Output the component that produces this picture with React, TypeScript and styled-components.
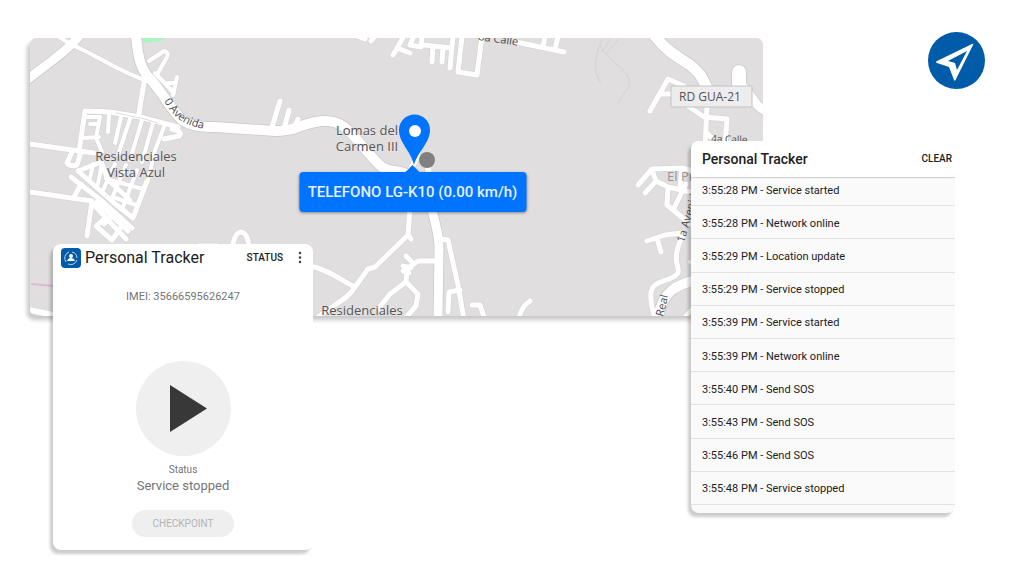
import React from "react";
import styled, { createGlobalStyle } from "styled-components";

const GlobalStyle = createGlobalStyle`
  * { box-sizing: border-box; }
  body { margin: 0; background: #fff; font-family: Roboto, "Liberation Sans", sans-serif; color: #212121; }
  button { font: inherit; color: inherit; border: 0; padding: 0; background: none; cursor: pointer; }
  h1, h2, p, ul { margin: 0; padding: 0; font-weight: 400; }
`;

const Page = styled.main`
  display: grid;
  grid-template-columns:
    minmax(0, 23fr) minmax(0, 260fr) minmax(0, 378fr) minmax(0, 72fr)
    minmax(0, 192fr) 30px;
  align-items: start;
  padding: 32px 39px 24px 30px;
`;

const MapCard = styled.section`
  grid-area: 1 / 1 / 2 / 5;
  position: relative;
  margin-top: 6px;
  height: 278px;
  border-radius: 7px;
  background: #e0dedf;
  box-shadow: -3px 4px 4px rgba(0, 0, 0, 0.22);
`;

const MapDrawing = styled.svg`
  display: block;
  width: 100%;
  height: 100%;
  border-radius: 7px;
  font-family: "Open Sans", "Noto Sans", sans-serif;
`;

const Popup = styled.div`
  position: absolute;
  top: 134px;
  left: calc(50% + 16px);
  transform: translateX(-50%);
  width: 227px;
  padding: 10px 0;
  border-radius: 4px;
  background: #0073ff;
  box-shadow: 0 1px 3px rgba(0, 0, 0, 0.4);
  color: #e6f1ff;
  font-size: 15px;
  font-weight: 500;
  line-height: 20px;
  text-align: center;
  white-space: nowrap;

  &::before {
    content: "";
    position: absolute;
    top: -7px;
    left: 50%;
    margin-left: -7px;
    border: solid transparent;
    border-width: 0 7px 7px;
    border-bottom-color: #0073ff;
  }
`;

const Badge = styled.button`
  grid-area: 1 / 5 / 2 / 7;
  justify-self: end;
  width: 57px;
  height: 57px;
  border-radius: 50%;
  background: #005ba8;

  svg { display: block; }
`;

const Card = styled.section`
  position: relative;
  border-radius: 8px;
  background: #fff;
  box-shadow: -3px 4px 3px rgba(0, 0, 0, 0.2);
`;

const TrackerCard = styled(Card)`
  grid-area: 1 / 2 / 2 / 3;
  margin-top: 212px;
  padding-bottom: 13px;
  color: #757575;
  text-align: center;
`;

const LogCard = styled(Card)`
  grid-area: 1 / 4 / 2 / 6;
  margin-top: 109px;
  padding-bottom: 8px;
  background: #fafafa;
  overflow: hidden;
`;

const TrackerHeader = styled.header`
  display: flex;
  align-items: center;
  height: 28px;
  padding: 0 8px;
  color: #212121;
`;

const AppIcon = styled.svg`
  flex: none;
  margin-right: 4px;
`;

const Title = styled.h1`
  flex: 1;
  font-size: 16px;
  line-height: 20px;
  text-align: left;
  white-space: nowrap;
`;

const LogTitle = styled(Title).attrs({ as: "h2" })`
  font-size: 14px;
  font-weight: 500;
`;

const HeaderAction = styled.button`
  && {
    font-size: 10px;
    font-weight: 500;
    line-height: 16px;
  }
`;

const MenuButton = styled.button`
  width: 10px;
  height: 16px;
  margin-left: 12px;

  svg { display: block; }
`;

const Imei = styled.p`
  margin-top: 17px;
  font-size: 11px;
  line-height: 16px;
`;

const PlayButton = styled.button`
  display: block;
  width: 95px;
  height: 95px;
  margin: 56px auto 0;
  border-radius: 50%;
  background: #efefef;

  svg { display: block; }
`;

const StatusLabel = styled.p`
  margin-top: 7px;
  font-size: 10px;
  line-height: 14px;
`;

const StatusValue = styled.p`
  font-size: 13px;
  line-height: 18px;
`;

const Checkpoint = styled.button`
  && {
    width: 102px;
    height: 27px;
    margin-top: 15px;
    border-radius: 14px;
    background: #efefef;
    color: #b3b3b3;
    font-size: 10px;
  }
`;

const LogHeader = styled.header`
  position: relative;
  z-index: 1;
  display: flex;
  align-items: center;
  height: 36px;
  padding: 0 3px 0 11px;
  background: #fff;
  box-shadow: 0 1px 1px rgba(0, 0, 0, 0.16);
`;

const LogList = styled.ul`
  display: grid;
  grid-auto-rows: 1fr;
  height: 332px;
  margin-top: -4px;
  list-style: none;
`;

const LogRow = styled.li`
  display: flex;
  align-items: center;
  padding: 2px 0 0 11px;
  border-bottom: 1px solid #e3e3e3;
  font-size: 11px;
  white-space: nowrap;
`;

type Road = { width: number; d: string };

const roads: Road[] = [
  { width: 9, d: "M80 35C68 50 50 62 28 79" },
  { width: 4, d: "M58 36L70 44C95 54 115 70 147 81" },
  {
    width: 10,
    d: "M136 36C138 58 141 71 152 81C164 95 170 108 181 119C190 126 200 127 215 127L275 131C297 132 304 121 325 121C343 121 350 132 358 141C368 152 374 160 382 167C390 172 396 170 404 173",
  },
  { width: 4, d: "M149 61L164 51Q169 52 167 57L158 73M155 73L174 93M177 77L173 95M168 83H176" },
  { width: 5, d: "M144 82L139 113" },
  { width: 5, d: "M79 152L85 111L110 112L140 117L178 127M172 129Q184 132 179 136L164 139" },
  { width: 4, d: "M84 117H100L96 138M90 124H98M83 138L99 137M96 138L102 152M109 114L108 132M121 117L115 143M130 119L118 155M142 120L130 160M153 123L142 162M164 127L155 150L148 180" },
  { width: 5, d: "M30 144L58 148L94 153M72 152L67 163Q70 167 77 165L81 152" },
  { width: 5, d: "M71 177L102 201L132 228M78 171L101 162L108 180L130 200M78 171L113 202L133 218L147 181" },
  { width: 4, d: "M93 164L90 178M102 163L98 184M115 164L103 190M126 165L112 198M137 170L123 207M106 179L143 189M113 197L136 205" },
  { width: 5, d: "M30 192L92 201L87 236M81 184L74 197M92 203L126 239M97 202L128 231M105 218L96 226L112 240L121 227M112 215L104 224" },
  { width: 6, d: "M28 310Q42 312 56 316" },
  { width: 5, d: "M232 248Q235 232 241 232Q248 233 249 248M198 246H218" },
  { width: 5, d: "M280 101L272 127M289 110L284 129M298 119L294 127" },
  { width: 5, d: "M357 36L365 39M375 36L371 41M404 36L393 55M397 48L410 53M414 36L410 45L421 47L422 36" },
  { width: 5, d: "M424 45L451 48M433 47L432 62M443 48L442 62M453 36L450 68M462 36L458 72L477 75L482 36" },
  { width: 5, d: "M516 42L564 52M545 36L543 47M558 36L555 50" },
  { width: 11, d: "M655 36C667 52 680 58 690 65C700 73 703 78 708 91" },
  { width: 5, d: "M650 111L668 79L684 86M661 94H674M688 106L704 117L727 119L725 145M707 106L705 147M706 132L720 146" },
  { width: 14, d: "M739 72V91" },
  { width: 9, d: "M741 85C752 92 752 106 768 112" },
  { width: 6, d: "M418 155L408 175M427 160L431 190" },
  { width: 9, d: "M430 200C434 222 439 232 439 247L438 320" },
  { width: 5, d: "M410 208L408 235L375 267L368 269L355 287C348 300 331 305 316 319M310 266C330 270 342 281 355 287M408 234L411 239" },
  { width: 5, d: "M436 261L418 261L407 269L406 282L390 294L378 309M406 282L418 294L416 306L404 320M406 256L414 264M403 266L411 268M403 271L409 273" },
  { width: 5, d: "M440 239L448 240L458 285L464 320M460 290L449 292L448 312M472 305L480 305L485 320M530 301Q520 308 519 320" },
  { width: 5, d: "M638 185L652 169L682 168L700 173M645 193L656 181L652 170M656 181L668 187L700 194M668 187L667 205L690 224M686 184L673 210M682 168L680 188" },
  { width: 5, d: "M647 241L665 235L682 233M657 238L661 252M683 235C668 263 684 270 676 275C669 282 652 280 651 293Q650 306 656 320" },
  { width: 10, d: "M700 279C677 284 661 291 658 320" },
  { width: 4, d: "M682 320L700 300M690 262H700" },
];

const log: [string, string][] = [
  ["3:55:28 PM", "Service started"],
  ["3:55:28 PM", "Network online"],
  ["3:55:29 PM", "Location update"],
  ["3:55:29 PM", "Service stopped"],
  ["3:55:39 PM", "Service started"],
  ["3:55:39 PM", "Network online"],
  ["3:55:40 PM", "Send SOS"],
  ["3:55:43 PM", "Send SOS"],
  ["3:55:46 PM", "Send SOS"],
  ["3:55:48 PM", "Service stopped"],
];

function StreetMap() {
  return (
    <MapDrawing viewBox="30 38 733 278" preserveAspectRatio="xMidYMid slice" role="img" aria-label="Street map">
      <rect x="-500" y="38" width="1800" height="278" fill="#e0dedf" />
      <path d="M142 38H166L160 41L144 43Z" fill="#a9f5c0" />
      <g fill="none" strokeLinecap="round" strokeLinejoin="round">
        {roads.map((r) => (
          <path key={r.d} d={r.d} stroke={r.width > 6 ? "#cac8c9" : "#d8d6d7"} strokeWidth={r.width + 1.5} />
        ))}
        {roads.map((r) => (
          <path key={r.d} d={r.d} stroke="#fff" strokeWidth={r.width} />
        ))}
        <path d="M602 40C594 58 593 71 601 83M600 46C614 66 632 72 629 85C628 91 621 95 618 104M611 38L602 52M618 40L606 54" stroke="#d2d0d1" strokeDasharray="3 1" />
        <path d="M116 113L145 119L157 123" stroke="#dedcdd" />
        <path d="M32 284L54 286" stroke="#dfb5da" strokeWidth="2" />
      </g>
      <g fill="#555354" fontSize="13" textAnchor="middle" stroke="#e9e7e8" strokeWidth="1" paintOrder="stroke">
        <text x="136" y="161">Residenciales</text>
        <text x="136" y="177">Vista Azul</text>
        <text x="367" y="135">Lomas del</text>
        <text x="367" y="151">Carmen III</text>
        <text x="362" y="315">Residenciales</text>
      </g>
      <path id="avenue" d="M164 101C172 116 185 129 216 130" fill="none" />
      <g fill="#4c4a4b" fontSize="11">
        <text><textPath href="#avenue">0 Avenida</textPath></text>
        <text transform="translate(478 40) rotate(8)">8a Calle</text>
        <text transform="translate(711 142) rotate(2)" fontSize="10">4a Calle</text>
        <text transform="translate(684 243) rotate(-74)">1a Avenida</text>
        <text transform="translate(663 317) rotate(-76)">Real</text>
      </g>
      <text x="667" y="181" fontSize="13" fill="#969495">El Prado</text>
      <rect x="671" y="86" width="81" height="21" rx="1" fill="#eeedee" stroke="#c4c2c3" />
      <text x="710" y="101" fontSize="12" fill="#555354" textAnchor="middle">RD GUA-21</text>
      <circle cx="427" cy="160" r="8" fill="#808080" />
      <path d="M414 165C411 151 399 143 399 130A15.500 15.500 0 0 1 430 130C430 143 418 151 414 165Z" fill="#0073ff" />
      <circle cx="415" cy="131" r="6" fill="#fff" />
    </MapDrawing>
  );
}

export default function App() {
  return (
    <>
      <GlobalStyle />
      <Page>
        <MapCard>
          <StreetMap />
          <Popup>TELEFONO LG-K10 (0.00 km/h)</Popup>
        </MapCard>

        <Badge aria-label="Navigate">
          <svg width="57" height="57" viewBox="0 0 57 57" aria-hidden="true">
            <path
              d="M44 12L9 29Q7 30 9 31L21 35L26 48Q27 50 28 47L45 13Q46 11 44 12ZM39 19L29 38L27 31L20 29Z"
              fill="#fff"
              fillRule="evenodd"
            />
          </svg>
        </Badge>

        <TrackerCard>
          <TrackerHeader>
            <AppIcon width="20" height="20" viewBox="0 0 20 20" aria-hidden="true">
              <rect width="20" height="20" rx="4" fill="#005ba8" />
              <g fill="none" stroke="#b8d3ea">
                <path d="M8 4A6.500 6.500 0 0 0 5 14M7 16A6.500 6.500 0 0 0 16 12M11 4A6.500 6.500 0 0 1 16 10" />
              </g>
              <circle cx="10" cy="8" r="2" fill="#fff" />
              <path d="M6 13Q7 10 10 10Q13 10 14 13Z" fill="#fff" />
            </AppIcon>
            <Title>Personal Tracker</Title>
            <HeaderAction>STATUS</HeaderAction>
            <MenuButton aria-label="More options">
              <svg width="10" height="16" viewBox="0 0 10 16" fill="#424242" aria-hidden="true">
                <circle cx="5" cy="3" r="1.250" />
                <circle cx="5" cy="7.500" r="1.250" />
                <circle cx="5" cy="12" r="1.250" />
              </svg>
            </MenuButton>
          </TrackerHeader>
          <Imei>IMEI: 35666595626247</Imei>
          <PlayButton aria-label="Start service">
            <svg width="95" height="95" viewBox="0 0 95 95" aria-hidden="true">
              <path d="M34 24L71 47.500L34 71Z" fill="#383838" />
            </svg>
          </PlayButton>
          <StatusLabel>Status</StatusLabel>
          <StatusValue>Service stopped</StatusValue>
          <Checkpoint disabled>CHECKPOINT</Checkpoint>
        </TrackerCard>

        <LogCard>
          <LogHeader>
            <LogTitle>Personal Tracker</LogTitle>
            <HeaderAction>CLEAR</HeaderAction>
          </LogHeader>
          <LogList>
            {log.map(([time, event], i) => (
              <LogRow key={i}>{`${time} - ${event}`}</LogRow>
            ))}
          </LogList>
        </LogCard>
      </Page>
    </>
  );
}
